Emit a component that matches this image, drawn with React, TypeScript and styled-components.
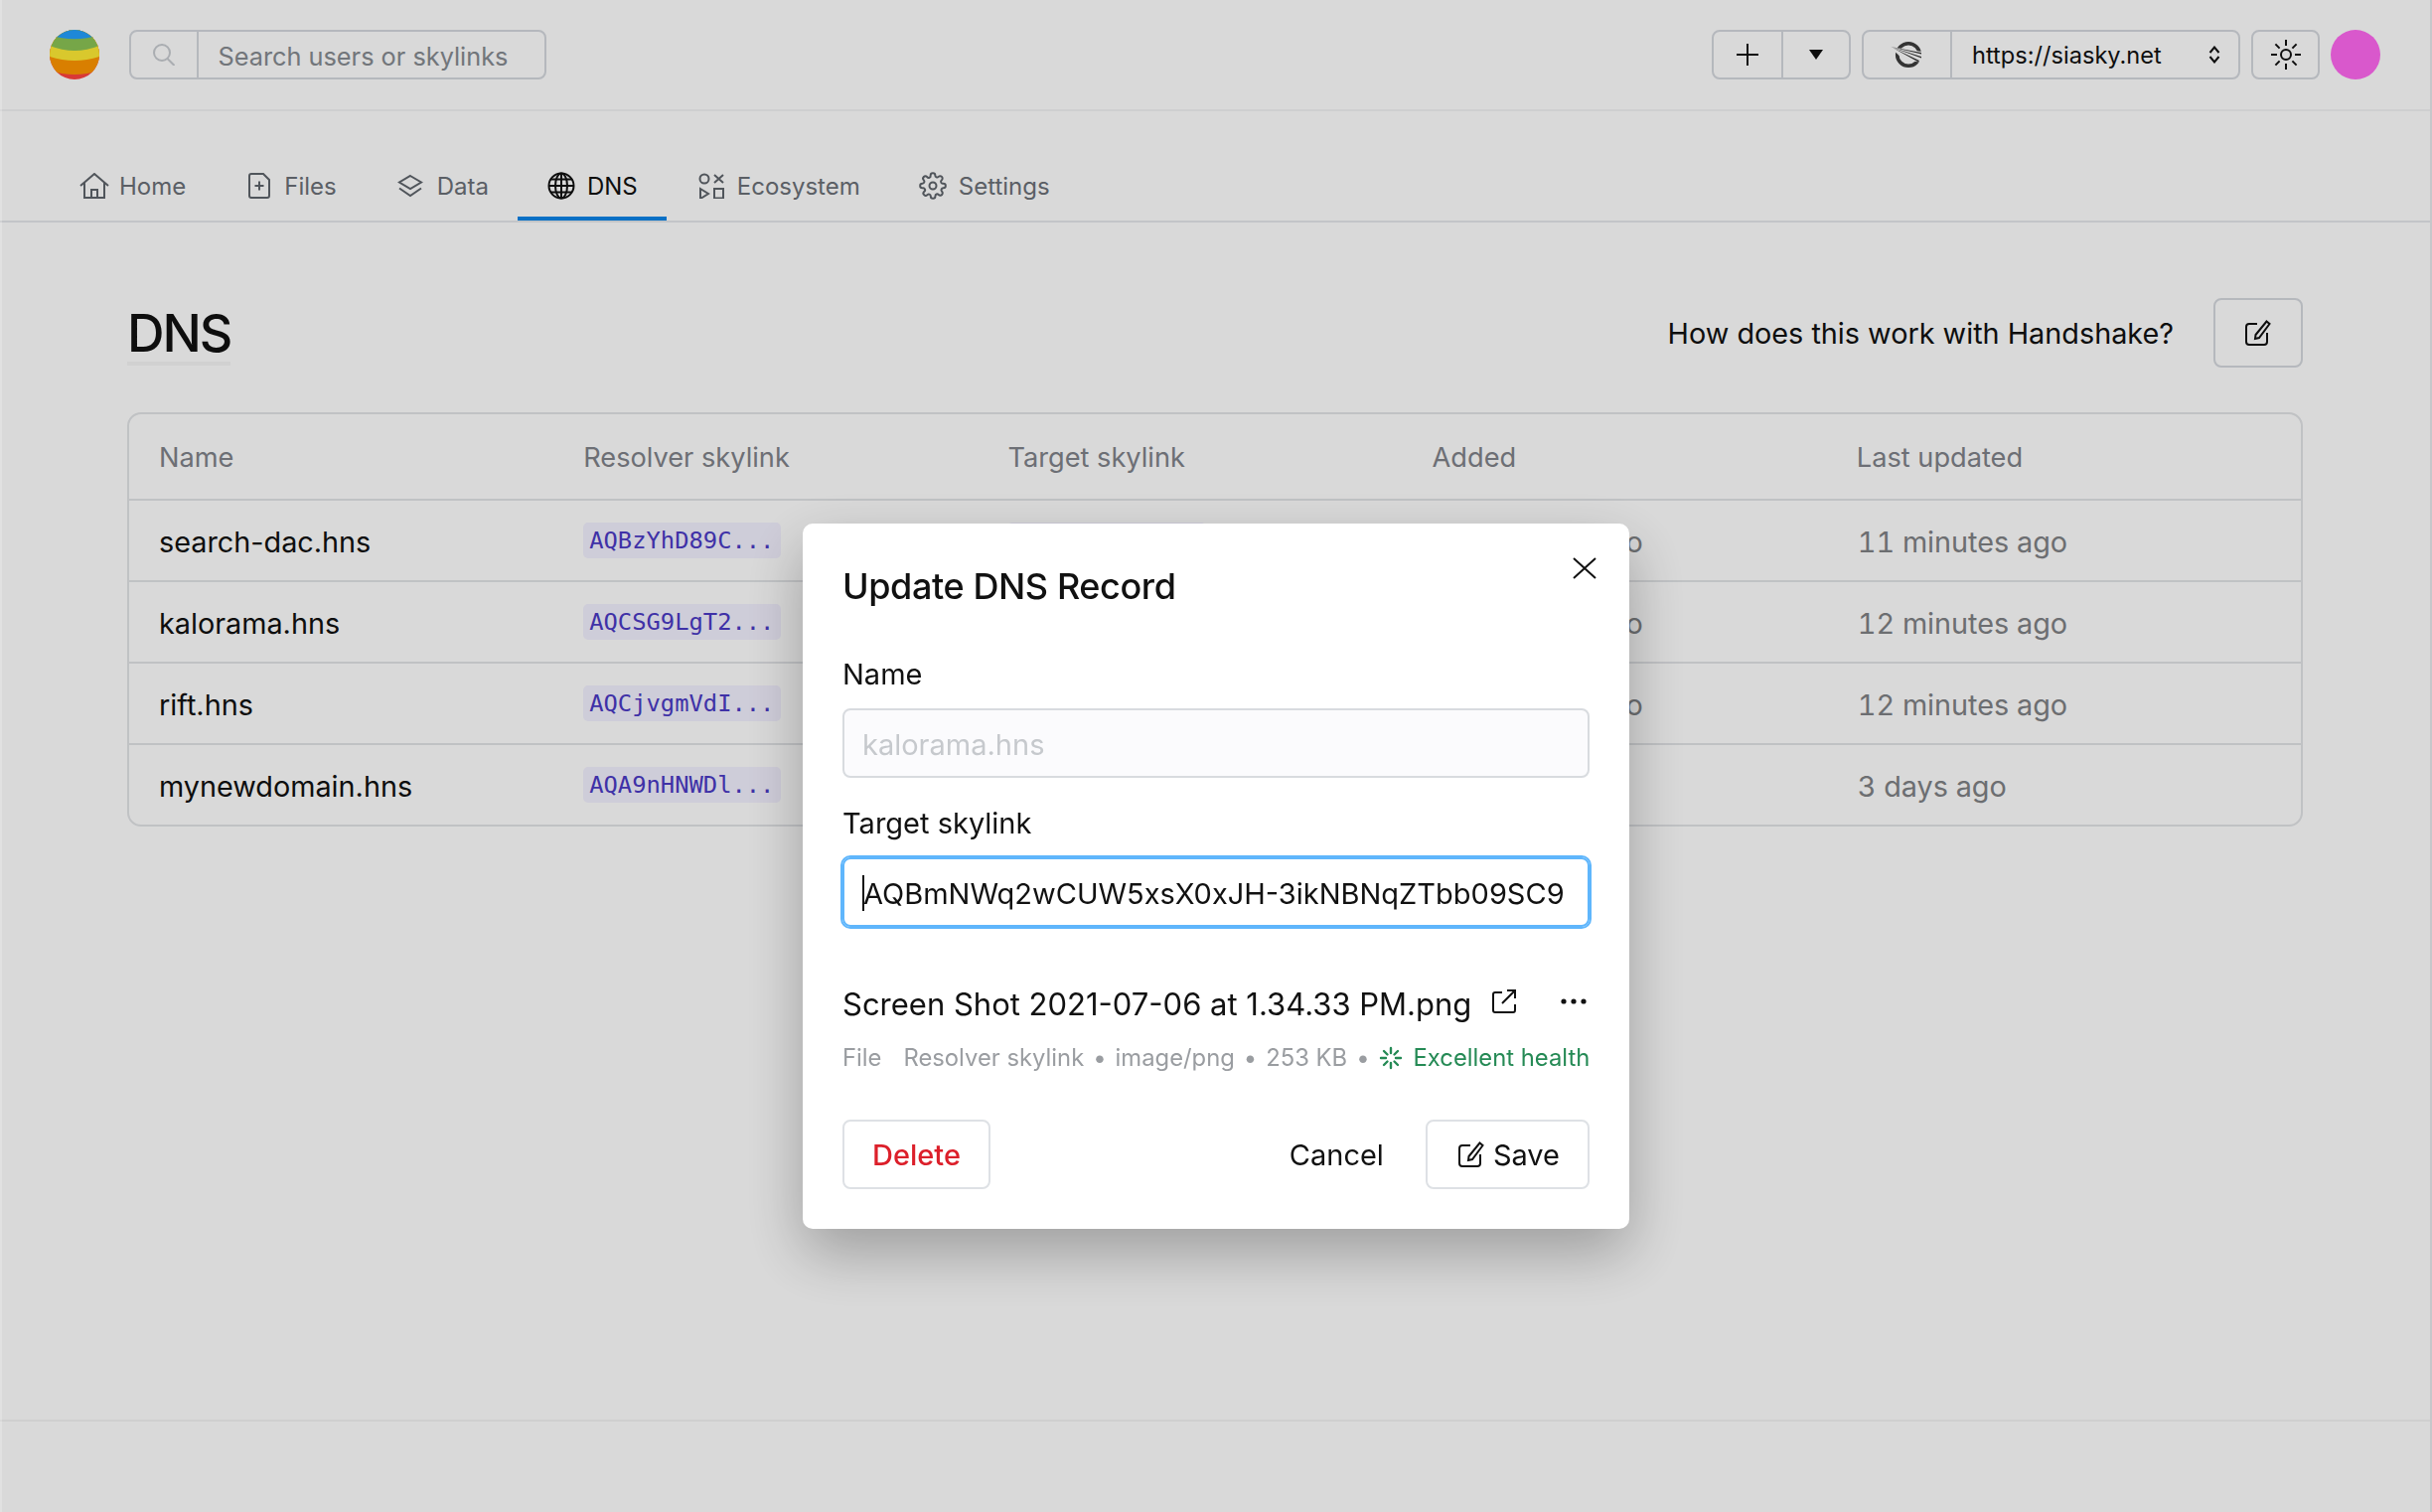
import React from 'react';
import styled, { createGlobalStyle, css } from 'styled-components';

const GlobalStyle = createGlobalStyle`
    html, body {
        margin: 0;
        padding: 0;
        background: #fff;
    }
    body {
        font-family: Inter, "Liberation Sans", sans-serif;
        color: #111;
    }
    * {
        box-sizing: border-box;
    }
`

const Page = styled.div`
    width: 2448px;
    height: 1522px;
    display: flex;
    flex-direction: column;
    overflow: hidden;
    background: #fff;
`
const TopBar = styled.header`
    height: 112px;
    flex-shrink: 0;
    padding: 30px 52px 0 50px;
    display: flex;
    gap: 30px;
    border-bottom: 2px solid #f3f4f5;
`
const Logo = styled.svg`
    width: 50px;
    height: 50px;
    flex-shrink: 0;
`
const FieldGroup = styled.div<{ $width: number }>`
    width: ${p => p.$width}px;
    height: 50px;
    display: flex;
    align-items: center;
    border: 2px solid #d5d9de;
    border-radius: 8px;
    font-size: 24px;
`
const GroupCell = styled.div<{ $width?: number }>`
    height: 100%;
    display: flex;
    align-items: center;
    justify-content: center;
    ${p => p.$width ? css`width: ${p.$width}px; flex-shrink: 0;` : css`flex: 1;`}
    & + & {
        border-left: 2px solid #d5d9de;
    }
`
const SearchText = styled.span`
    flex: 1;
    padding: 2px 0 0 19.5px;
    font-size: 25.3px;
    color: #868b91;
`
const ToolGroup = styled.div`
    margin-left: auto;
    display: flex;
    gap: 11px;
`
const UrlCell = styled(GroupCell)`
    justify-content: space-between;
    padding: 0 18px 0 20px;
    font-size: 23.6px;
`
const Avatar = styled.div`
    width: 50px;
    height: 50px;
    border-radius: 50%;
    background: #ff68f0;
`
const TabBar = styled.nav`
    height: 112px;
    flex-shrink: 0;
    padding: 0 0 0 50.5px;
    display: flex;
    align-items: flex-end;
    border-bottom: 2px solid #e6e8eb;
`
const Tab = styled.div<{ $active?: boolean; $gap: number }>`
    height: 62px;
    padding: 0 29.5px 4px;
    display: flex;
    align-items: center;
    gap: ${p => p.$gap}px;
    font-size: 24px;
    color: ${p => p.$active ? '#111' : '#6b7077'};
    border-bottom: 4px solid ${p => p.$active ? '#0a84e8' : 'transparent'};
    svg {
        flex-shrink: 0;
    }
`
const Main = styled.main`
    flex: 1;
    padding: 76px 130px 0 128px;
`
const TitleRow = styled.div`
    display: flex;
    align-items: flex-start;
    justify-content: space-between;
    height: 115px;
`
const Title = styled.h1`
    margin: 0;
    font-size: 52px;
    line-height: 72px;
    height: 68px;
    font-weight: 500;
    letter-spacing: -2px;
    border-bottom: 4px solid #f6f6f6;
`
const HelpRow = styled.div`
    display: flex;
    align-items: center;
    gap: 40px;
    font-size: 28.8px;
`
const IconButton = styled.button`
    width: 90px;
    height: 70px;
    display: flex;
    align-items: center;
    justify-content: center;
    background: transparent;
    border: 2px solid #d5d9de;
    border-radius: 8px;
    padding: 0;
`
const Table = styled.div`
    border: 2px solid #e2e4e7;
    border-radius: 14px;
`
const Row = styled.div<{ $head?: boolean }>`
    height: ${p => p.$head ? 85 : 82}px;
    padding: 2px 20px 0 30px;
    display: grid;
    grid-template-columns: repeat(5, 1fr);
    align-items: center;
    font-size: ${p => p.$head ? 27.2 : 28.8}px;
    color: ${p => p.$head ? '#80838a' : '#111'};
    & + & {
        border-top: 2px solid #e2e4e7;
    }
`
const Muted = styled.span`
    margin-left: 1px;
    color: #7f8285;
    font-size: 28.8px;
    font-variant-numeric: tabular-nums;
`
const Chip = styled.span`
    justify-self: start;
    height: 36px;
    margin-top: -2px;
    padding: 0 7px 0 6px;
    display: flex;
    align-items: center;
    border-radius: 5px;
    background: #f3f1ff;
    color: #4a3ac5;
    font-family: "DejaVu Sans Mono", monospace;
    font-size: 23.8px;
`
const Footer = styled.footer`
    height: 93px;
    flex-shrink: 0;
    border-top: 2px solid #f4f4f4;
`
const Overlay = styled.div`
    position: fixed;
    inset: 0;
    background: rgba(0, 0, 0, 0.15);
    border-left: 2px solid rgba(255, 255, 255, 0.2);
    border-right: 2px solid #c6c7ca;
`
const Modal = styled.div`
    position: absolute;
    left: 806px;
    top: 527px;
    width: 832px;
    height: 710px;
    padding: 41px 40px 40px;
    display: flex;
    flex-direction: column;
    background: #fff;
    border-radius: 10px;
    box-shadow: 0 24px 60px rgba(0, 0, 0, 0.28);
`
const CloseButton = styled.button`
    position: absolute;
    top: 33px;
    right: 33px;
    width: 24px;
    height: 24px;
    padding: 0;
    background: none;
    border: 0;
    display: flex;
`
const ModalTitle = styled.h2`
    margin: 0 0 49px;
    font-size: 36px;
    line-height: 44px;
    font-weight: 500;
    letter-spacing: -0.4px;
`
const Label = styled.label`
    display: block;
    font-size: 29px;
    line-height: 36px;
    margin-bottom: 16px;
`
const Input = styled.div<{ $disabled?: boolean }>`
    height: 70px;
    margin-bottom: 28px;
    padding: 2px 18px 0;
    display: flex;
    align-items: center;
    font-size: 29px;
    border-radius: 8px;
    ${p => p.$disabled ? css`
        background: #fbfbfd;
        border: 2px solid #d8dbdf;
        color: #c6c9cd;
    ` : css`
        background: #fff;
        border: 2px solid #5fb6fc;
        outline: 2px solid #5fb6fc;
        color: #111;
    `}
`
const Caret = styled.span`
    width: 2px;
    height: 36px;
    background: #111;
    margin-right: -1px;
`
const FileRow = styled.div`
    margin-top: 29px;
    display: flex;
    align-items: center;
    font-size: 31px;
    height: 40px;
`
const FileActions = styled.div`
    margin-left: auto;
    padding-right: 3px;
    margin-bottom: 4px;
    display: flex;
    align-items: center;
    gap: 45px;
`
const MetaRow = styled.div`
    margin-top: 20px;
    display: flex;
    align-items: center;
    font-size: 23.8px;
    color: #9a9da1;
    white-space: nowrap;
`
const Dot = styled.span<{ $blank?: boolean }>`
    margin: 0 ${p => p.$blank ? 11 : 9}px;
`
const Health = styled.span`
    display: flex;
    align-items: center;
    gap: 11px;
    color: #258a55;
`
const Actions = styled.div`
    margin-top: auto;
    display: flex;
    align-items: center;
`
const Button = styled.button<{ $danger?: boolean; $plain?: boolean }>`
    height: 70px;
    padding: 0 28px;
    display: flex;
    align-items: center;
    gap: 9px;
    font: inherit;
    font-size: 29px;
    font-weight: ${p => p.$danger ? 500 : 400};
    color: ${p => p.$danger ? '#dc1f2a' : '#111'};
    background: #fff;
    border: 2px solid ${p => p.$plain ? 'transparent' : '#dee1e5'};
    border-radius: 8px;
`
const CancelButton = styled(Button)`
    margin-left: auto;
    margin-right: 12px;
`
const SaveButton = styled(Button)`
    padding: 0 28px 0 31px;
`

const HomeIcon = () => (
    <svg width="30" height="26" viewBox="0 0 30 26" fill="none" stroke="#5f646b" strokeWidth="2">
        <path d="M1 13 15 1l14 12M5 9.500V25h20V9.500M12 25v-8h6v8" />
    </svg>
)
const FilePlusIcon = () => (
    <svg width="28" height="26" viewBox="0 0 28 26" fill="none" stroke="#5f646b" strokeWidth="2">
        <path d="M7 1h12l6 6v16a2 2 0 0 1-2 2H7a2 2 0 0 1-2-2V3a2 2 0 0 1 2-2zM15 8.500v9M10.500 13h9" />
    </svg>
)
const LayersIcon = () => (
    <svg width="30" height="24" viewBox="0 0 30 24" fill="none" stroke="#5f646b" strokeWidth="2">
        <path d="M15 2 26 8.500 15 15 4 8.500zM4 14.500 15 22l11-7.500" />
    </svg>
)
const GlobeIcon = () => (
    <svg width="28" height="28" viewBox="0 0 28 28" fill="none" stroke="#111" strokeWidth="2">
        <circle cx="14" cy="14" r="12.500" />
        <ellipse cx="14" cy="14" rx="6" ry="12.500" />
        <path d="M14 1.500v25M1.500 14h25M3.500 7.500h21M3.500 20.500h21" />
    </svg>
)
const EcosystemIcon = () => (
    <svg width="30" height="26" viewBox="0 0 30 26" fill="none" stroke="#5f646b" strokeWidth="2">
        <circle cx="8" cy="6" r="4.500" />
        <path d="M18 2l9 8M27 2l-9 8M4 16l8 5-8 5zM18 16h9v9.500h-9z" />
    </svg>
)
const GearIcon = () => (
    <svg width="28" height="28" viewBox="0 0 24 24" fill="none" stroke="#5f646b" strokeWidth="1.700" strokeLinejoin="round">
        <circle cx="12" cy="12" r="3" />
        <path d="M19.400 15a1.650 1.650 0 0 0 .33 1.820l.06.06a2 2 0 1 1-2.830 2.830l-.06-.06a1.650 1.650 0 0 0-2.800 1.170V21a2 2 0 0 1-4 0v-.09a1.650 1.650 0 0 0-2.800-1.110l-.06.06a2 2 0 1 1-2.830-2.830l.06-.06A1.650 1.650 0 0 0 3.090 14H3a2 2 0 0 1 0-4h.09A1.650 1.650 0 0 0 4.200 7.200l-.06-.06a2 2 0 1 1 2.830-2.830l.06.06A1.650 1.650 0 0 0 10 3.090V3a2 2 0 0 1 4 0v.09a1.650 1.650 0 0 0 2.800 1.110l.06-.06a2 2 0 1 1 2.830 2.830l-.06.06A1.650 1.650 0 0 0 20.910 10H21a2 2 0 0 1 0 4h-.09a1.650 1.650 0 0 0-1.510 1z" />
    </svg>
)
const SearchIcon = () => (
    <svg width="22" height="22" viewBox="0 0 22 22" fill="none" stroke="#c8ccd1" strokeWidth="2">
        <circle cx="9" cy="9" r="8" />
        <path d="M14.500 15l7 7" />
    </svg>
)
const PlusIcon = () => (
    <svg width="22" height="22" viewBox="0 0 22 22" stroke="#111" strokeWidth="2">
        <path d="M11 0v22M0 11h22" />
    </svg>
)
const CaretDown = () => (
    <svg width="14" height="10" viewBox="0 0 14 10" fill="#111">
        <path d="M0 0h14L7 10z" />
    </svg>
)
const PortalLogo = () => (
    <svg width="36" height="28" viewBox="0 0 36 28" fill="none">
        <circle cx="19" cy="14" r="11.300" stroke="#3c3c3c" strokeWidth="3.600" />
        <path d="M0 6l33 5v11L14 19z" fill="#fff" />
        <path d="M1 6l31 6v1.600zM1 6l31 10v1.600zM3 7l27 13-1 1.500z" fill="#3c3c3c" />
    </svg>
)
const UpDown = () => (
    <svg width="12" height="18" viewBox="0 0 12 18" fill="none" stroke="#111" strokeWidth="2">
        <path d="M1.500 7 6 1.500 10.500 7M1.500 11 6 16.500l4.500-5.500" />
    </svg>
)
const SunIcon = () => (
    <svg width="30" height="30" viewBox="0 0 30 30" fill="none" stroke="#111" strokeWidth="2">
        <circle cx="15" cy="15" r="5" />
        <path d="M15 0v6M15 24v6M0 15h6M24 15h6M4.400 4.400l4.200 4.200M21.400 21.400l4.200 4.200M4.400 25.600l4.200-4.200M21.400 8.600l4.200-4.200" />
    </svg>
)
const EditIcon = () => (
    <svg width="26" height="26" viewBox="0 0 26 26" fill="none" stroke="#111" strokeWidth="2">
        <path d="M12 4H4a3 3 0 0 0-3 3v15a3 3 0 0 0 3 3h15a3 3 0 0 0 3-3V13" />
        <path d="M21.500 1.500 24.500 4 14 18l-4 1 .5-4z" />
    </svg>
)
const CloseIcon = () => (
    <svg width="24" height="24" viewBox="0 0 24 24" stroke="#111" strokeWidth="2">
        <path d="M1 2l22 20M23 2 1 22" />
    </svg>
)
const ExternalIcon = () => (
    <svg width="24" height="24" viewBox="0 0 24 24" fill="none" stroke="#111" strokeWidth="2">
        <path d="M10 3H3a2 2 0 0 0-2 2v16a2 2 0 0 0 2 2h18a2 2 0 0 0 2-2v-6M15 1h8v8M23 1 10 14" />
    </svg>
)
const DotsIcon = () => (
    <svg width="26" height="6" viewBox="0 0 26 6" fill="#111">
        <circle cx="3" cy="3" r="2.600" />
        <circle cx="13" cy="3" r="2.600" />
        <circle cx="23" cy="3" r="2.600" />
    </svg>
)
const HealthIcon = () => (
    <svg width="24" height="24" viewBox="0 0 24 24" fill="none" stroke="#258a55" strokeWidth="2.400" strokeLinecap="round">
        <path d="M12 2v5M12 17v5M2 12h5M17 12h5M5 5l3.500 3.500M15.500 15.500 19 19M5 19l3.500-3.500M15.500 8.500 19 5" />
    </svg>
)

const records = [
    { name: 'search-dac.hns', resolver: 'AQBzYhD89C...', target: 'AQDwh1jnoZ...', added: '11 minutes ago', updated: '11 minutes ago' },
    { name: 'kalorama.hns', resolver: 'AQCSG9LgT2...', target: 'AQBmNWq2wC...', added: '12 minutes ago', updated: '12 minutes ago' },
    { name: 'rift.hns', resolver: 'AQCjvgmVdI...', target: 'AQCAoW2zQf...', added: '12 minutes ago', updated: '12 minutes ago' },
    { name: 'mynewdomain.hns', resolver: 'AQA9nHNWDl...', target: 'AQDRh7aYc1...', added: '3 days ago', updated: '3 days ago' },
];

function App() {
    return (
        <Page>
            <GlobalStyle />
            <TopBar>
                <Logo viewBox="0 0 50 50">
                    <defs>
                        <clipPath id="ball"><circle cx="25" cy="25" r="25" /></clipPath>
                    </defs>
                    <g clipPath="url(#ball)">
                        <rect width="50" height="50" fill="#ff4440" />
                        <path d="M0 41q25 8 50 0V0H0z" fill="#ff9600" />
                        <path d="M0 27q25 8 50 0V0H0z" fill="#ffec36" />
                        <path d="M0 16q25 10 50 0V0H0z" fill="#8bc355" />
                        <path d="M0 5q25 8.600 50 0V0H0z" fill="#24a0fe" />
                    </g>
                </Logo>
                <FieldGroup $width={420}>
                    <GroupCell $width={66}><SearchIcon /></GroupCell>
                    <GroupCell><SearchText>Search users or skylinks</SearchText></GroupCell>
                </FieldGroup>
                <ToolGroup>
                    <FieldGroup $width={140}>
                        <GroupCell $width={68}><PlusIcon /></GroupCell>
                        <GroupCell><CaretDown /></GroupCell>
                    </FieldGroup>
                    <FieldGroup $width={381}>
                        <GroupCell $width={87}><PortalLogo /></GroupCell>
                        <UrlCell>https://siasky.net<UpDown /></UrlCell>
                    </FieldGroup>
                    <FieldGroup $width={69}>
                        <GroupCell><SunIcon /></GroupCell>
                    </FieldGroup>
                    <Avatar />
                </ToolGroup>
            </TopBar>
            <TabBar>
                <Tab $gap={10}><HomeIcon />Home</Tab>
                <Tab $gap={12}><FilePlusIcon />Files</Tab>
                <Tab $gap={12}><LayersIcon />Data</Tab>
                <Tab $active $gap={12}><GlobeIcon />DNS</Tab>
                <Tab $gap={11}><EcosystemIcon />Ecosystem</Tab>
                <Tab $gap={12}><GearIcon />Settings</Tab>
            </TabBar>
            <Main>
                <TitleRow>
                    <Title>DNS</Title>
                    <HelpRow>
                        How does this work with Handshake?
                        <IconButton><EditIcon /></IconButton>
                    </HelpRow>
                </TitleRow>
                <Table>
                    <Row $head>
                        <span>Name</span>
                        <span>Resolver skylink</span>
                        <span>Target skylink</span>
                        <span>Added</span>
                        <span>Last updated</span>
                    </Row>
                    {records.map(record => (
                        <Row key={record.name}>
                            <span>{record.name}</span>
                            <Chip>{record.resolver}</Chip>
                            <Chip>{record.target}</Chip>
                            <Muted>{record.added}</Muted>
                            <Muted>{record.updated}</Muted>
                        </Row>
                    ))}
                </Table>
            </Main>
            <Footer />
            <Overlay>
                <Modal>
                    <CloseButton><CloseIcon /></CloseButton>
                    <ModalTitle>Update DNS Record</ModalTitle>
                    <Label>Name</Label>
                    <Input $disabled>kalorama.hns</Input>
                    <Label>Target skylink</Label>
                    <Input><Caret />AQBmNWq2wCUW5xsX0xJH-3ikNBNqZTbb09SC9</Input>
                    <FileRow>
                        Screen Shot 2021-07-06 at 1.34.33 PM.png
                        <FileActions>
                            <ExternalIcon />
                            <DotsIcon />
                        </FileActions>
                    </FileRow>
                    <MetaRow>
                        <span>File</span>
                        <Dot $blank />
                        <span>Resolver skylink</span>
                        <Dot>•</Dot>
                        <span>image/png</span>
                        <Dot>•</Dot>
                        <span>253 KB</span>
                        <Dot>•</Dot>
                        <Health><HealthIcon />Excellent health</Health>
                    </MetaRow>
                    <Actions>
                        <Button $danger>Delete</Button>
                        <CancelButton $plain>Cancel</CancelButton>
                        <SaveButton><EditIcon />Save</SaveButton>
                    </Actions>
                </Modal>
            </Overlay>
        </Page>
    );
}

export default App
